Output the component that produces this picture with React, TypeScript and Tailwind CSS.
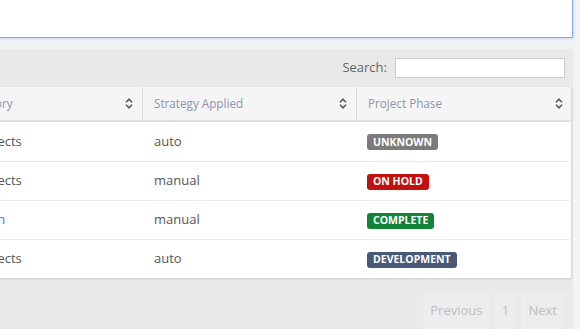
import React from "react";

const rows = [
  { category: "IT Projects", strategy: "auto", phase: "UNKNOWN", color: "bg-[#7b7b7b]", link: false },
  { category: "IT Projects", strategy: "manual", phase: "ON HOLD", color: "bg-[#c2110e]", link: false },
  { category: "Design", strategy: "manual", phase: "COMPLETE", color: "bg-[#13833a]", link: true },
  { category: "IT Projects", strategy: "auto", phase: "DEVELOPMENT", color: "bg-[#4b5979]", link: false },
];

const SortIcon = () => (
  <svg width="8" height="11" viewBox="0 0 8 11" className="shrink-0">
    <path d="M1 4.2 L4 1.2 L7 4.2" fill="none" stroke="#5a5a5a" strokeWidth="1.6" />
    <path d="M1 6.8 L4 9.8 L7 6.8" fill="none" stroke="#5a5a5a" strokeWidth="1.6" />
  </svg>
);

const headers = ["Category", "Strategy Applied", "Project Phase"];

export default function App() {
  return (
    <div className="w-[580px] h-[329px] overflow-hidden bg-[#f2f3f5] font-['Open_Sans',sans-serif]">
      <div className="-ml-[48px] w-[621px]">
        {/* Text area above */}
        <div className="h-[38px] bg-white border border-t-0 border-[#82a9e6] shadow-[0_0_3px_rgba(102,150,230,0.5)] mb-[11px]" />

        {/* Panel */}
        <div className="bg-[#e9e9e9] pt-[9px] h-[290px]">
          <div className="flex items-center justify-end gap-[8px] pr-[8px] h-[20px] mb-[9px]">
            <span className="text-[13px] text-[#666]">Search:</span>
            <input className="w-[170px] h-[20px] bg-white border border-[#cfcfcf] outline-none" />
          </div>

          {/* Table */}
          <div className="mx-[1px] bg-white border-r border-[#dcdcdc] shadow-[0_1px_2px_rgba(0,0,0,0.12)]">
            <div className="grid grid-cols-[190px_214px_215px] h-[35px] bg-[#f5f5f5] border-b-2 border-[#dedede]">
              {headers.map((h, i) => (
                <div
                  key={h}
                  className={`flex items-center justify-between pl-[11px] pr-[9px] text-[11.7px] text-[#8c95ad] ${i < 2 ? "border-r border-[#dedede]" : ""}`}
                >
                  <span>{h}</span>
                  <SortIcon />
                </div>
              ))}
            </div>
            {rows.map((r, i) => (
              <div
                key={i}
                className={`grid grid-cols-[190px_214px_215px] h-[39px] items-center text-[13px] text-[#555] ${i > 0 ? "border-t border-[#ececec]" : ""}`}
              >
                <div className={r.link ? "pl-[11px] text-[#3b7cc4]" : "pl-[6px]"}>{r.category}</div>
                <div className="pl-[11px]">{r.strategy}</div>
                <div className="pl-[10px]">
                  <span className={`inline-flex items-center h-[16px] px-[6px] rounded-[3px] text-[10.5px] font-bold text-white leading-none ${r.color}`}>
                    {r.phase}
                  </span>
                </div>
              </div>
            ))}
          </div>

          {/* Pagination */}
          <div className="flex justify-end gap-[5px] pr-[9px] mt-[15px]">
            <div className="h-[36px] px-[7px] flex items-center bg-[#ededed] text-[13px] text-[#bdbdbd] rounded-[2px]">Previous</div>
            <div className="h-[36px] w-[22px] flex items-center justify-center bg-[#ededed] text-[13px] text-[#bdbdbd] rounded-[2px]">1</div>
            <div className="h-[36px] px-[7px] flex items-center bg-[#ededed] text-[13px] text-[#bdbdbd] rounded-[2px]">Next</div>
          </div>
        </div>
      </div>
    </div>
  );
}
